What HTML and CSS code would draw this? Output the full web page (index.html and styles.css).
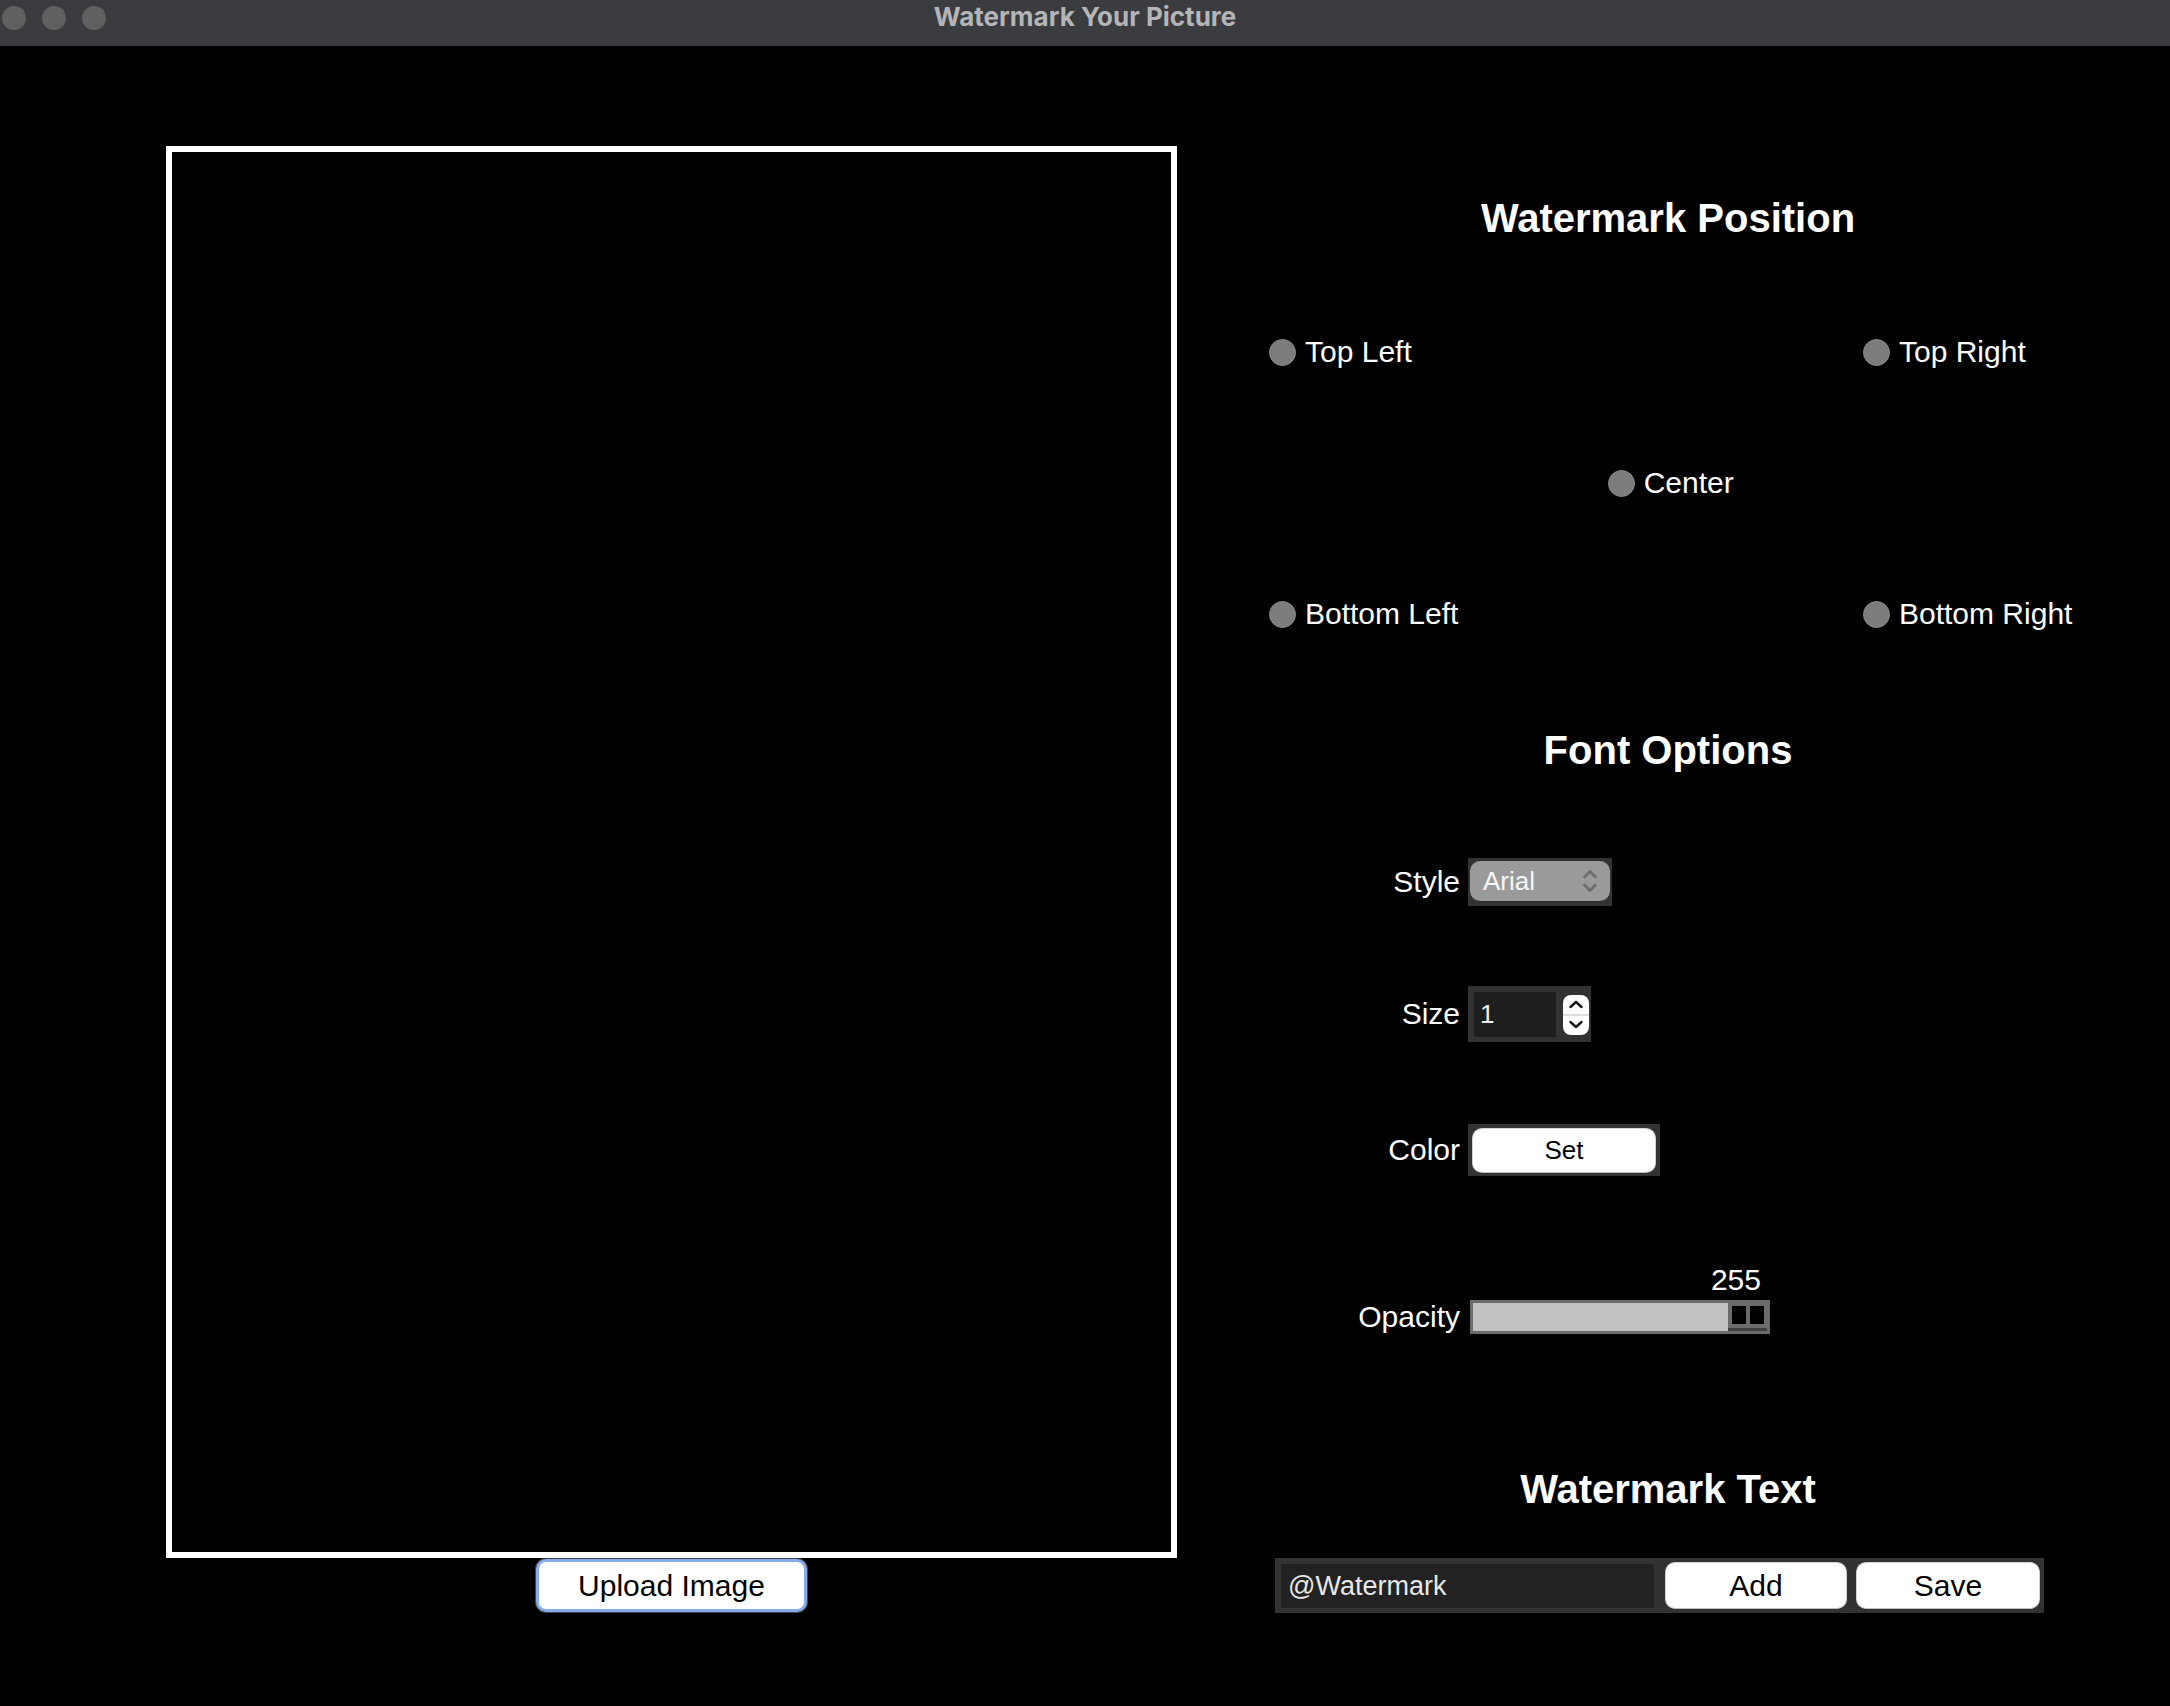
FILE: index.html
```html
<!DOCTYPE html>
<html lang="en">
<head>
<meta charset="utf-8">
<title>Watermark Your Picture</title>
<link rel="stylesheet" href="styles.css">
</head>
<body>
<div class="window">
  <header class="titlebar">
    <div class="lights"><span class="light"></span><span class="light"></span><span class="light"></span></div>
    <div class="title">Watermark Your Picture</div>
    <div class="spacer"></div>
  </header>
  <main class="content">
    <section class="left">
      <div class="canvas"></div>
      <button class="upload">Upload Image</button>
    </section>
    <section class="right">
      <h2 class="heading h-pos">Watermark Position</h2>
      <div class="positions">
        <label class="radio"><span class="dot"></span><span>Top Left</span></label>
        <label class="radio"><span class="dot"></span><span>Top Right</span></label>
        <label class="radio center"><span class="dot"></span><span>Center</span></label>
        <label class="radio"><span class="dot"></span><span>Bottom Left</span></label>
        <label class="radio"><span class="dot"></span><span>Bottom Right</span></label>
      </div>
      <h2 class="heading h-font">Font Options</h2>
      <div class="row row-style">
        <span class="lbl">Style</span>
        <div class="frame select-frame">
          <div class="select">
            <span class="select-text">Arial</span>
            <svg class="chev" width="16" height="26" viewBox="0 0 16 26"><path d="M2.5 9 L8 3.5 L13.5 9" fill="none" stroke="#6c6c6c" stroke-width="2.6" stroke-linecap="round" stroke-linejoin="round"/><path d="M2.5 17 L8 22.5 L13.5 17" fill="none" stroke="#6c6c6c" stroke-width="2.6" stroke-linecap="round" stroke-linejoin="round"/></svg>
          </div>
        </div>
      </div>
      <div class="row row-size">
        <span class="lbl">Size</span>
        <div class="frame size-frame">
          <div class="num">1</div>
          <div class="stepper">
            <svg width="26" height="40" viewBox="0 0 26 40"><path d="M7.5 12 L13 7 L18.5 12" fill="none" stroke="#111" stroke-width="2.4" stroke-linecap="round" stroke-linejoin="round"/><line x1="0" y1="20" x2="26" y2="20" stroke="#d4d4d4" stroke-width="1.5"/><path d="M7.5 27 L13 32 L18.5 27" fill="none" stroke="#111" stroke-width="2.4" stroke-linecap="round" stroke-linejoin="round"/></svg>
          </div>
        </div>
      </div>
      <div class="row row-color">
        <span class="lbl">Color</span>
        <div class="frame color-frame"><button class="btn set">Set</button></div>
      </div>
      <div class="opacity">
        <div class="row value-row"><span></span><span class="value">255</span></div>
        <div class="row slider-row">
          <span class="lbl">Opacity</span>
          <div class="slider">
            <div class="fill"></div>
            <div class="handle"><span></span><span></span></div>
          </div>
        </div>
      </div>
      <h2 class="heading h-text">Watermark Text</h2>
      <div class="text-row">
        <div class="text-input">@Watermark</div>
        <button class="btn add">Add</button>
        <button class="btn save">Save</button>
      </div>
    </section>
  </main>
</div>
</body>
</html>
```
FILE: styles.css
```css
html, body {
  margin: 0;
  padding: 0;
  background: #000;
}
body {
  width: 2170px;
  min-height: 1706px;
  font-family: "Liberation Sans", Arial, Helvetica, sans-serif;
  color: #fff;
}
.titlebar {
  height: 46px;
  background: #3b3c3f;
  display: grid;
  grid-template-columns: 1fr auto 1fr;
  align-items: start;
}
.lights {
  display: flex;
  gap: 16px;
  padding: 6px 0 0 2px;
}
.light {
  width: 24px;
  height: 24px;
  border-radius: 50%;
  background: #5f6161;
}
.title {
  font-family: Inter, "Liberation Sans", sans-serif;
  font-weight: 700;
  font-size: 26px;
  line-height: 34px;
  color: #b5b5b7;
  letter-spacing: 0;
}
.content {
  display: flex;
  align-items: flex-start;
  padding-left: 166px;
  gap: 92px;
}
.left {
  display: flex;
  flex-direction: column;
  align-items: center;
  width: 1011px;
  padding-top: 100px;
}
.canvas {
  box-sizing: border-box;
  width: 1011px;
  height: 1412px;
  border: 6px solid #fff;
  background: #000;
}
.upload {
  box-sizing: border-box;
  margin-top: 1px;
  width: 271px;
  height: 53px;
  background: #fff;
  border: 3px solid #86abe9;
  border-radius: 10px;
  box-shadow: 0 0 0 1px #444;
  font-family: "Liberation Sans", Arial, sans-serif;
  font-size: 30px;
  color: #000;
  padding: 0;
}
.right {
  width: 798px;
  padding-top: 149px;
  display: flex;
  flex-direction: column;
}
.heading {
  margin: 0;
  font-size: 40px;
  line-height: 46px;
  font-weight: 700;
  text-align: center;
  color: #fff;
}
.positions {
  margin-top: 91px;
  display: grid;
  grid-template-columns: 594px 1fr;
  grid-auto-rows: 40px;
  row-gap: 91px;
}
.radio {
  display: flex;
  align-items: center;
  gap: 9px;
  font-size: 30px;
  line-height: 40px;
  white-space: nowrap;
}
.radio.center {
  grid-column: 1 / 3;
  justify-self: center;
}
.dot {
  box-sizing: border-box;
  width: 27px;
  height: 27px;
  border-radius: 50%;
  background: #7c7c7c;
  border: 1px solid #8a8a8a;
}
.h-font { margin-top: 93px; }
.row {
  display: grid;
  grid-template-columns: 191px auto;
  column-gap: 8px;
  align-items: center;
  justify-items: start;
}
.lbl {
  justify-self: end;
  font-size: 30px;
  line-height: 40px;
}
.frame {
  background: #323232;
  box-sizing: border-box;
}
.row-style { margin-top: 85px; }
.select-frame {
  padding: 3px 2px 5px 2px;
}
.select {
  box-sizing: border-box;
  width: 140px;
  height: 40px;
  border-radius: 10px;
  background: #9a9a9a;
  display: flex;
  align-items: center;
  justify-content: space-between;
  padding: 0 12px 0 13px;
}
.select-text {
  font-size: 26px;
  color: #f7f7f7;
}
.row-size { margin-top: 80px; }
.size-frame {
  display: flex;
  align-items: center;
  gap: 7px;
  padding: 6px 2px 5px 6px;
}
.num {
  box-sizing: border-box;
  width: 82px;
  height: 45px;
  background: #1e1e1e;
  font-size: 26px;
  line-height: 45px;
  padding-left: 6px;
  color: #f2f2f2;
}
.stepper {
  width: 26px;
  height: 40px;
  background: #fff;
  border-radius: 8px;
  overflow: hidden;
}
.stepper svg { display: block; }
.row-color { margin-top: 82px; }
.color-frame {
  padding: 4px 4px 3px 4px;
}
.btn {
  box-sizing: border-box;
  background: #fff;
  border: 1px solid #d2d2d2;
  border-bottom-color: #bdbdbd;
  border-radius: 10px;
  font-family: "Liberation Sans", Arial, sans-serif;
  color: #000;
  padding: 0;
}
.set {
  display: block;
  width: 184px;
  height: 45px;
  font-size: 26px;
}
.opacity { margin-top: 84px; }
.value-row {
  height: 40px;
}
.value {
  width: 300px;
  text-align: right;
  padding-right: 7px;
  box-sizing: border-box;
  font-size: 30px;
  line-height: 40px;
}
.slider-row { margin-top: -3px; }
.slider {
  box-sizing: border-box;
  width: 300px;
  height: 34px;
  border: 3px solid #6b6b6b;
  background: #c1c1c1;
  display: flex;
  margin-left: 2px;
}
.fill { flex: 1; }
.handle {
  box-sizing: border-box;
  width: 39px;
  height: 100%;
  background: #6b6b6b;
  display: flex;
  gap: 4px;
  padding: 3px 3px 4px 4px;
  border-bottom: 3px solid #3f3f3f;
}
.handle span {
  flex: 1;
  background: #000;
}
.h-text { margin-top: 129px; }
.text-row {
  margin-top: 46px;
  margin-left: 6px;
  align-self: flex-start;
  display: flex;
  align-items: center;
  background: #323232;
  padding: 4px 4px 4px 6px;
}
.text-input {
  box-sizing: border-box;
  width: 373px;
  height: 44px;
  background: #222;
  color: #e8e8e8;
  font-size: 27px;
  line-height: 44px;
  padding-left: 7px;
}
.add {
  margin-left: 11px;
  width: 182px;
  height: 47px;
  font-size: 30px;
}
.save {
  margin-left: 9px;
  width: 184px;
  height: 47px;
  font-size: 30px;
}
```
